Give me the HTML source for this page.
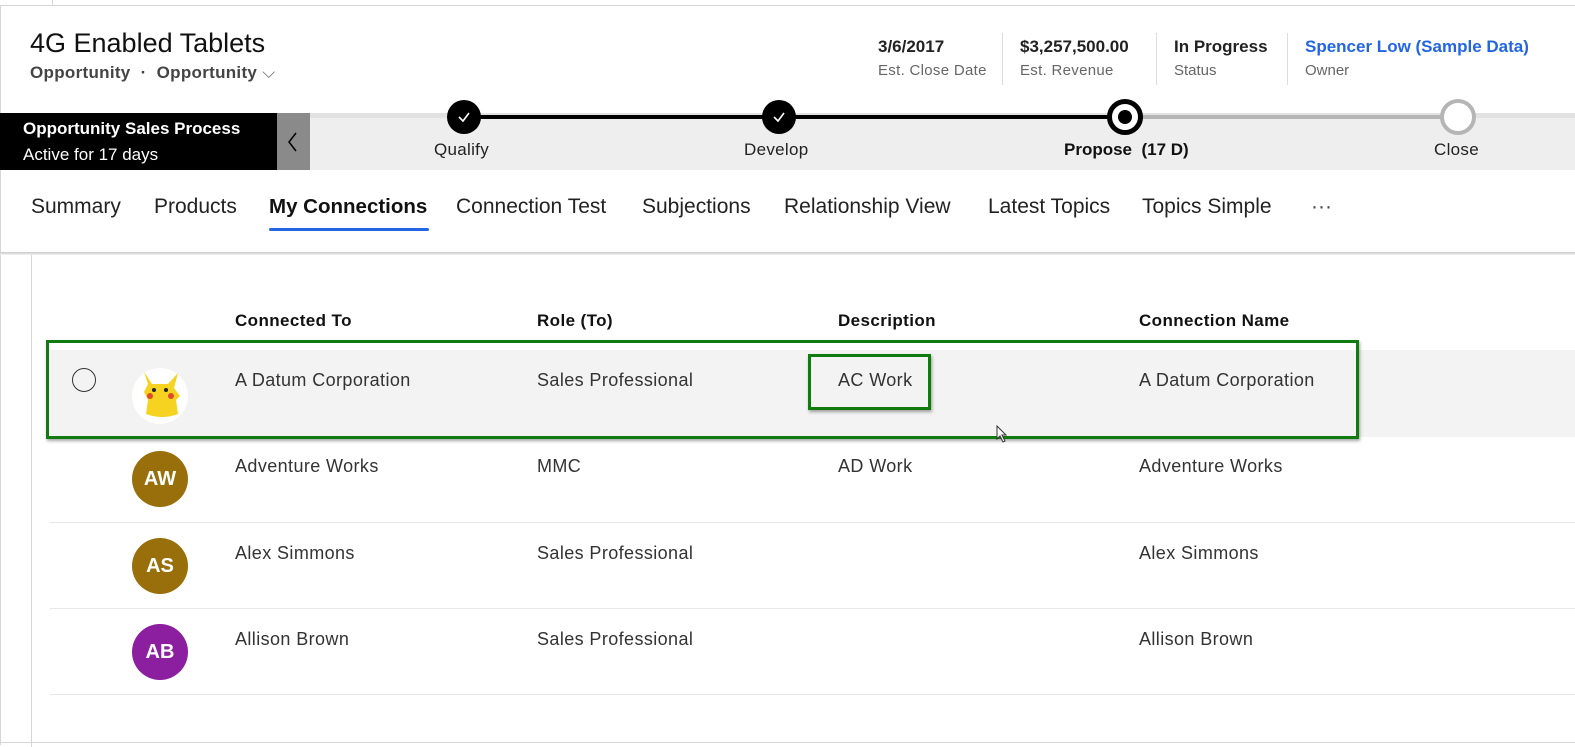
<!DOCTYPE html>
<html><head><style>
*{margin:0;padding:0;box-sizing:border-box}
body{width:1575px;height:747px;background:#fff;font-family:"Segoe UI","Liberation Sans",sans-serif;position:relative;overflow:hidden;color:#333}
.a{position:absolute;white-space:nowrap}
.c{position:absolute;border-radius:50%}
.av{position:absolute;width:56px;height:56px;border-radius:50%;color:#fff;font-weight:bold;font-size:20px;text-align:center;line-height:56px;left:132px}
.cell{position:absolute;font-size:18px;letter-spacing:.4px;color:#333}
.hd{position:absolute;font-size:17px;letter-spacing:.4px;font-weight:bold;color:#111;top:311px}
.tab{position:absolute;font-size:21px;color:#222;top:195px;white-space:nowrap}
</style></head><body>
<div class="a" style="left:0;top:5px;width:1575px;height:1px;background:#d6d6d6"></div>
<div class="a" style="left:52px;top:0;width:1px;height:6px;background:#d6d6d6"></div>
<div class="a" style="left:0;top:5px;width:1px;height:740px;background:#d6d6d6"></div>
<div class="a" style="left:30px;top:28px;font-size:27px;color:#111">4G Enabled Tablets</div>
<div class="a" style="left:30px;top:63px;font-size:17px;letter-spacing:.3px;font-weight:bold;color:#444">Opportunity &nbsp;·&nbsp; Opportunity <span style="font-weight:normal;color:#666">⌵</span></div>
<div class="a" style="left:878px;top:37px;font-size:17px;font-weight:bold;color:#222">3/6/2017</div>
<div class="a" style="left:878px;top:62px;font-size:15px;letter-spacing:.3px;color:#666">Est. Close Date</div>
<div class="a" style="left:1002px;top:33px;width:1px;height:52px;background:#ddd"></div>
<div class="a" style="left:1020px;top:37px;font-size:17px;font-weight:bold;color:#222">$3,257,500.00</div>
<div class="a" style="left:1020px;top:62px;font-size:15px;letter-spacing:.3px;color:#666">Est. Revenue</div>
<div class="a" style="left:1156px;top:33px;width:1px;height:52px;background:#ddd"></div>
<div class="a" style="left:1174px;top:37px;font-size:17px;font-weight:bold;color:#222">In Progress</div>
<div class="a" style="left:1174px;top:62px;font-size:15px;color:#666">Status</div>
<div class="a" style="left:1287px;top:33px;width:1px;height:52px;background:#ddd"></div>
<div class="a" style="left:1305px;top:37px;font-size:17px;font-weight:bold;color:#2266e3">Spencer Low (Sample Data)</div>
<div class="a" style="left:1305px;top:62px;font-size:15px;color:#666">Owner</div>
<!-- stage bar -->
<div class="a" style="left:310px;top:113px;width:1265px;height:57px;background:#eeeeee"></div>
<div class="a" style="left:310px;top:113px;width:1265px;height:5px;background:#e2e2e2"></div>
<div class="a" style="left:0;top:113px;width:277px;height:57px;background:#000"></div>
<div class="a" style="left:23px;top:119px;font-size:17px;font-weight:bold;color:#fff">Opportunity Sales Process</div>
<div class="a" style="left:23px;top:145px;font-size:17px;color:#fff">Active for 17 days</div>
<div class="a" style="left:277px;top:113px;width:33px;height:57px;background:#8a8a8a"></div>
<svg class="a" style="left:284px;top:130px" width="18" height="24"><path d="M12 3 L5 12 L12 21" stroke="#000" stroke-width="1.5" fill="none"/></svg>
<div class="a" style="left:464px;top:115px;width:661px;height:4px;background:#000"></div>
<div class="a" style="left:1125px;top:115px;width:333px;height:4px;background:#b5b5b5"></div>
<div class="c" style="left:447px;top:100px;width:34px;height:34px;background:#000"></div>
<svg class="a" style="left:455px;top:108px" width="18" height="18"><path d="M4 9 L8 13 L14 5" stroke="#fff" stroke-width="1.6" fill="none"/></svg>
<div class="c" style="left:762px;top:100px;width:34px;height:34px;background:#000"></div>
<svg class="a" style="left:770px;top:108px" width="18" height="18"><path d="M4 9 L8 13 L14 5" stroke="#fff" stroke-width="1.6" fill="none"/></svg>
<div class="c" style="left:1107px;top:99px;width:36px;height:36px;background:#fff;border:5px solid #000"></div>
<div class="c" style="left:1118px;top:110px;width:14px;height:14px;background:#000"></div>
<div class="c" style="left:1440px;top:99px;width:36px;height:36px;background:#fff;border:4px solid #b5b5b5"></div>
<div class="a" style="left:434px;top:140px;font-size:17px;letter-spacing:.3px;color:#222">Qualify</div>
<div class="a" style="left:744px;top:140px;font-size:17px;letter-spacing:.3px;color:#222">Develop</div>
<div class="a" style="left:1064px;top:140px;font-size:17px;font-weight:bold;color:#111">Propose&nbsp; (17 D)</div>
<div class="a" style="left:1434px;top:140px;font-size:17px;letter-spacing:.3px;color:#222">Close</div>
<!-- tabs -->
<div class="tab" style="left:31px">Summary</div>
<div class="tab" style="left:154px">Products</div>
<div class="tab" style="left:269px;font-weight:bold;color:#111;font-size:20.5px">My Connections</div>
<div class="a" style="left:269px;top:228px;width:160px;height:3px;background:#2266e3;border-radius:2px"></div>
<div class="tab" style="left:456px">Connection Test</div>
<div class="tab" style="left:642px">Subjections</div>
<div class="tab" style="left:784px">Relationship View</div>
<div class="tab" style="left:988px">Latest Topics</div>
<div class="tab" style="left:1142px">Topics Simple</div>
<div class="tab" style="left:1311px;color:#444">···</div>
<div class="a" style="left:0;top:252px;width:1575px;height:3px;background:linear-gradient(#c8c8c8,#f4f4f4)"></div>
<div class="a" style="left:31px;top:255px;width:1px;height:492px;background:#d6d6d6"></div>
<!-- grid -->
<div class="hd" style="left:235px">Connected To</div>
<div class="hd" style="left:537px">Role (To)</div>
<div class="hd" style="left:838px">Description</div>
<div class="hd" style="left:1139px">Connection Name</div>
<div class="a" style="left:50px;top:350px;width:1525px;height:87px;background:#f3f3f3"></div>
<div class="a" style="left:46px;top:340px;width:1313px;height:99px;border:3px solid #107c10;box-shadow:1px 2px 3px rgba(0,0,0,.35)"></div>
<div class="c" style="left:72px;top:368px;width:24px;height:24px;border:1.5px solid #333"></div>
<div class="c" style="left:132px;top:368px;width:56px;height:56px;background:#fff"></div>
<svg class="a" style="left:138px;top:370px" width="46" height="50"><path d="M6 2 L14 14 L30 14 L40 3 L36 18 L42 26 L38 30 L40 44 Q24 50 8 44 L10 30 L6 22 L10 14 Z" fill="#f5d320"/><circle cx="16" cy="20" r="2" fill="#222"/><circle cx="28" cy="20" r="2" fill="#222"/><circle cx="12" cy="26" r="3" fill="#e04a2a"/><circle cx="33" cy="26" r="3" fill="#e04a2a"/></svg>
<div class="cell" style="left:235px;top:370px">A Datum Corporation</div>
<div class="cell" style="left:537px;top:370px">Sales Professional</div>
<div class="a" style="left:808px;top:354px;width:123px;height:56px;border:3px solid #107c10;box-shadow:1px 2px 3px rgba(0,0,0,.35)"></div>
<div class="cell" style="left:838px;top:370px">AC Work</div>
<div class="cell" style="left:1139px;top:370px">A Datum Corporation</div>
<svg class="a" style="left:996px;top:425px" width="12" height="18"><path d="M1 1 L1 14 L4 11 L7 17 L9 16 L6 10 L10 10 Z" fill="#fff" stroke="#333"/></svg>

<div class="av" style="top:451px;background:#986f0b">AW</div>
<div class="cell" style="left:235px;top:456px">Adventure Works</div>
<div class="cell" style="left:537px;top:456px">MMC</div>
<div class="cell" style="left:838px;top:456px">AD Work</div>
<div class="cell" style="left:1139px;top:456px">Adventure Works</div>
<div class="a" style="left:50px;top:522px;width:1525px;height:1px;background:#e8e8e8"></div>

<div class="av" style="top:538px;background:#986f0b">AS</div>
<div class="cell" style="left:235px;top:543px">Alex Simmons</div>
<div class="cell" style="left:537px;top:543px">Sales Professional</div>
<div class="cell" style="left:1139px;top:543px">Alex Simmons</div>
<div class="a" style="left:50px;top:608px;width:1525px;height:1px;background:#e8e8e8"></div>

<div class="av" style="top:624px;background:#8c1ea0">AB</div>
<div class="cell" style="left:235px;top:629px">Allison Brown</div>
<div class="cell" style="left:537px;top:629px">Sales Professional</div>
<div class="cell" style="left:1139px;top:629px">Allison Brown</div>
<div class="a" style="left:50px;top:694px;width:1525px;height:1px;background:#e8e8e8"></div>
<div class="a" style="left:0;top:742px;width:1575px;height:1px;background:#d6d6d6"></div>
</body></html>
